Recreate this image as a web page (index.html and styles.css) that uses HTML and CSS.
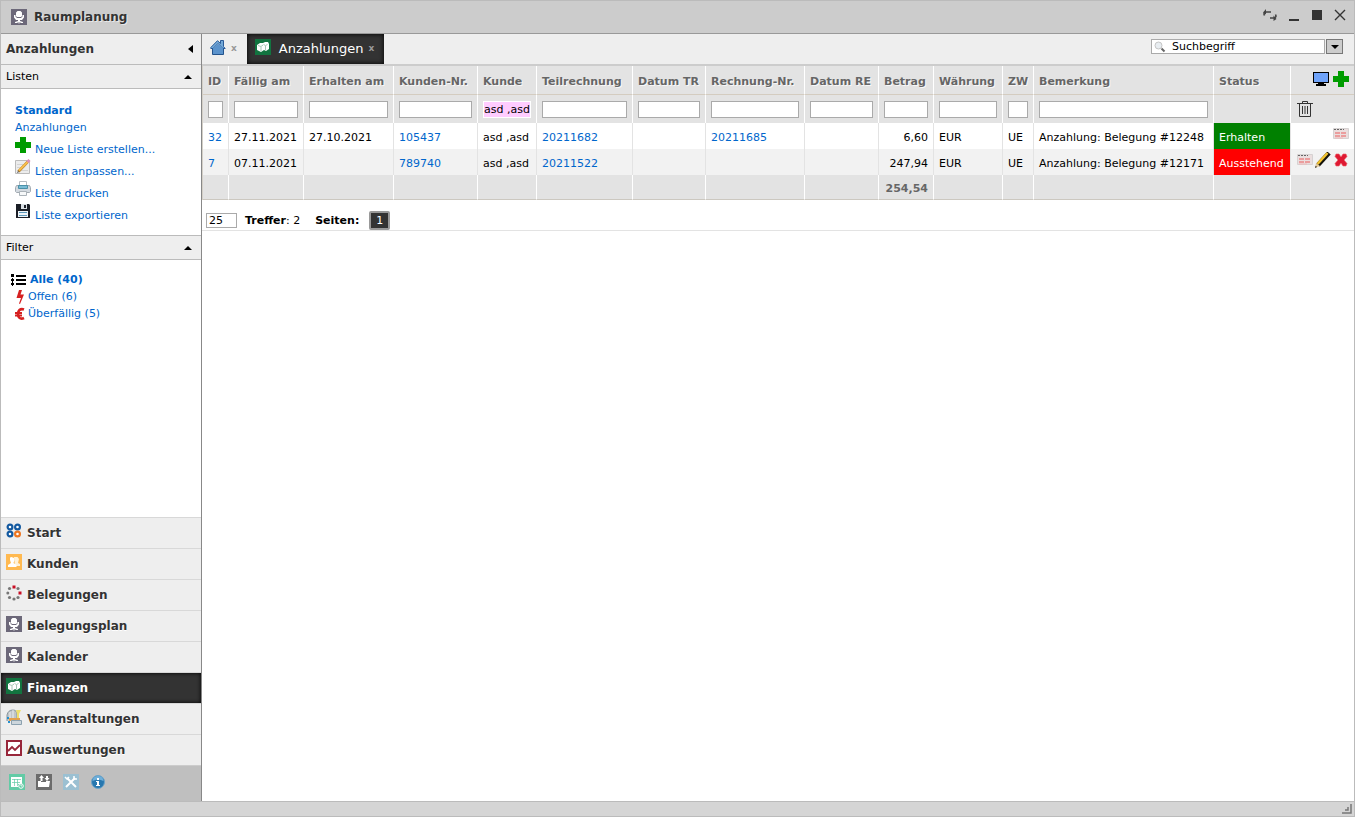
FILE: index.html
```html
<!DOCTYPE html>
<html lang="de">
<head>
<meta charset="utf-8">
<title>Raumplanung</title>
<link rel="stylesheet" href="styles.css">
</head>
<body>
<svg class="sprite" aria-hidden="true">
  <symbol id="chair" viewBox="0 0 16 16"><path fill="#6c6879" d="M0 0h16v16H0z"/><path fill="#fff" d="M6.500 2h3l1.500 1.500V7L10 8H6L5 7V3.500zM3 6h1.500v1.500L6 9h4l1.500-1.500V6H13v2.500L11 11H9v1l3 1v1h-2l-1.500-1v1.500h-1V13L6 14H4v-1l3-1v-1H5L3 8.500z"/></symbol>
  <symbol id="money" viewBox="0 0 16 16"><path fill="#127440" d="M0 0h16v16H0z"/><path fill="#fff" d="M2 6l3-2h3l2-1h3l1 2v5l-3 2-2-1-3 2-4-2z"/><path fill="none" stroke="#8fb8a1" stroke-width=".8" d="M3 6.500l3 1 2-1.500M6 8v4M8.500 5.500l2 1 2-1M10.500 7v4"/></symbol>
  <symbol id="home" viewBox="0 0 16 16"><path fill="#4d85bf" stroke="#23538c" d="M2.500 8v7.500h11V8"/><path fill="#73a9d8" stroke="#2a5b98" d="M.8 8.500L7.500 1.700 10.500 4.500V1.500h3v6l1.700 2H13L8 4.500 3 9.500H.8z"/><path fill="#5b93cc" d="M3 9l5-4 5 4v6H3z"/></symbol>
  <symbol id="plus" viewBox="0 0 16 16"><path fill="#009c00" d="M5 0h6v5h5v6h-5v5H5v-5H0V5h5z"/></symbol>
  <symbol id="note" viewBox="0 0 16 16"><path fill="#ececec" stroke="#bbb" d="M.5 1.500h14v13H.5z"/><path stroke="#d3d3d3" d="M2 5.500h6M2 8.500h5M2 11.500h11"/><path stroke="#b57f2a" stroke-width="2.600" d="M3.500 12.500L13 2.500"/><path stroke="#f8bd4a" stroke-width="2" d="M4 11.500L13 2.500"/><path stroke="#dc91b8" stroke-width="3" d="M12.500 3l2-2"/><path fill="#333" d="M2 14l1-2 1 1z"/></symbol>
  <symbol id="printer" viewBox="0 0 16 16"><path fill="#fff" stroke="#b6bcc2" d="M4.500.5h7v5h-7z"/><path fill="#d4dae0" stroke="#a3abb2" d="M1.500 4.500h13l1 2v4l-1 1h-13l-1-1v-4z"/><path fill="#79bcd5" stroke="#4a90a8" d="M3.500 4.500h9v3h-9z"/><path fill="#f6f8f9" stroke="#abb3b9" d="M4.500 10.500h7v4h-7z"/></symbol>
  <symbol id="disk" viewBox="0 0 16 16"><path fill="#1b1e26" d="M1 1h13l1 1v13H1z"/><path fill="#dae0e5" d="M6 1h6v5H6z"/><path fill="#1b1e26" d="M9 2h2v3H9z"/><path fill="#eef3f7" d="M3 8h10v6H3z"/><path stroke="#5b97ba" d="M4 9.500h8M4 12.500h8"/></symbol>
  <symbol id="list" viewBox="0 0 16 12"><path fill="#000" d="M0 0h3v3H0zM0 5h3v2H0zM1 4h1v4H1zM0 9h3v2H0zM1 8h1v4H1zM5 1h10v2H5zM5 5h10v2H5zM5 9h10v2H5z"/></symbol>
  <symbol id="bolt" viewBox="0 0 10 14"><path fill="#d62020" d="M4 0h3L5.500 4.500H9L5 14l-1-.5L6 8H1.500z"/></symbol>
  <symbol id="euro" viewBox="0 0 10 14"><path fill="none" stroke="#d62020" stroke-width="2.600" d="M9 2.500C5 1 3 4 3 7s2 6 6 4"/><path stroke="#d62020" stroke-width="2" d="M0 6h7M0 8.500h7"/></symbol>
  <symbol id="start" viewBox="0 0 16 16"><g fill="#fff" stroke-width="2.200"><circle cx="4" cy="4" r="2.400" stroke="#1359a0"/><circle cx="11.500" cy="4" r="2.400" stroke="#1359a0"/><circle cx="4" cy="11" r="2.400" stroke="#1359a0"/><circle cx="11.500" cy="11" r="2.400" stroke="#ee7621"/></g></symbol>
  <symbol id="people" viewBox="0 0 16 16"><path fill="#ffb950" d="M0 0h16v16H0z"/><path fill="#fff2d9" d="M8 3h3.500L13 5l-1 4 2 1v2H9z"/><path fill="#fff" d="M4 3.500L5.500 3 8 4l.5 2L7.500 9l3 2v2H2v-2l3-2-1-3z"/></symbol>
  <symbol id="ring" viewBox="0 0 16 16"><g fill="#777"><circle cx="3.500" cy="3.500" r="1.600"/><circle cx="12" cy="3.500" r="1.600"/><circle cx="1.800" cy="8" r="1.500"/><circle cx="3.500" cy="12.500" r="1.600"/><circle cx="8" cy="14" r="1.600"/><circle cx="12" cy="12.500" r="1.600"/></g><path fill="#c90e24" d="M6.500.5h3v3h-3zM12.500 6.500h3v3h-3z"/></symbol>
  <symbol id="event" viewBox="0 0 16 16"><path fill="#c0c5c8" stroke="#8b969d" d="M1 12V6q1-5 6-5 4 0 4 5v4"/><path fill="none" stroke="#eceff1" d="M4 10V3M7 9V1"/><path fill="#eee06c" d="M10 1h5l-2 4v6h-2V5z"/><path fill="#e3a04c" d="M3 9h11v3H3z"/><path fill="#cdd6dc" stroke="#8ba1af" d="M5.500 11.500h10v4h-10z"/><path fill="#248fcf" d="M1 8h2v2H1zM2 12h2v2H2z"/></symbol>
  <symbol id="chart" viewBox="0 0 16 16"><path fill="#fff" stroke="#98263a" stroke-width="2" d="M1 1h14v14H1z"/><path fill="none" stroke="#98263a" stroke-width="1.800" d="M2 11l4-4 3 3 5-5"/></symbol>
  <symbol id="calendar" viewBox="0 0 16 16"><path fill="#63cba6" d="M0 0h16v16H0z"/><path fill="#fff" d="M2 3h11v7H9v3H2z"/><path stroke="#63cba6" stroke-width=".7" d="M3 5.500h9M3 8.500h8M5.500 5v7M8.500 5v7"/><circle cx="12" cy="12" r="2.300" fill="#63cba6" stroke="#fff"/><path fill="none" stroke="#fff" stroke-width=".8" d="M12 10.500V12h1"/></symbol>
  <symbol id="transfer" viewBox="0 0 16 16"><path fill="#6c6c6c" d="M0 0h16v16H0z"/><path fill="#fff" d="M2 7h3v1h5V7h4l-1 6H2zM5.500 1L8 4H6.500v3h-2V4H3zM10 2h2v2h1.500L11 7 8.500 4H10z"/></symbol>
  <symbol id="tools" viewBox="0 0 16 16"><path fill="#9bc0d2" d="M0 0h16v16H0z"/><path stroke="#fff" stroke-width="2" d="M4 4l9 9M12 4l-9 9"/><path fill="none" stroke="#fff" stroke-width="1.500" d="M2 3l2 2 2-2M11 2v3h3"/></symbol>
  <symbol id="info" viewBox="0 0 16 16"><circle cx="8" cy="8" r="6.500" fill="#2777af" stroke="#6fa5c9"/><path fill="#70afd9" d="M2.500 7Q3 2 8 2t5.500 5Q8 4 2.500 7z"/><path fill="#fff" d="M7 4h2v2H7zM6 7h3v4h1v1H6v-1h1V8H6z"/></symbol>
  <symbol id="monitor" viewBox="0 0 16 16"><path fill="#000" d="M0 1h16v11h-5v1h2v2H3v-2h2v-1H0z"/><path fill="#6fa3fa" d="M1 2h14v9H1z"/></symbol>
  <symbol id="trash" viewBox="0 0 16 16"><path fill="none" stroke="#333" d="M5.500 2V.5h5V2M0 2.500h16M2.500 3v12.500h11V3"/><path stroke="#333" d="M5.500 5v8M8 5v8M10.500 5v8"/></symbol>
  <symbol id="slip" viewBox="0 0 16 16"><path fill="#eadede" stroke="#d6d2d2" d="M.5 2.500h15v10H.5z"/><path stroke="#666" stroke-dasharray="2 1" d="M1 3.500h10"/><path stroke="#eb9d9d" stroke-width="2" stroke-dasharray="5 1" d="M2 7h12M2 10h11"/><path stroke="#f0b8b8" d="M2 12h8"/></symbol>
  <symbol id="pencil" viewBox="0 0 16 16"><path stroke="#15130b" stroke-width="4.600" d="M3 13L14 1"/><path stroke="#f3c32f" stroke-width="2.600" d="M2.500 12L12.500 1"/><path fill="#e3c999" d="M0 16l1-5 4 3z"/><path fill="#222" d="M0 16l.7-2.300L2 15z"/></symbol>
  <symbol id="delete" viewBox="0 0 16 16"><path fill="#df1932" stroke="#ed5b63" stroke-width=".6" d="M3 2h3l2 3 2-3h3l1 2.500L11 8l3 3.500-1 2.500h-3l-2-3-2 3H3l-1-2.500L5 8 2 4.500z"/></symbol>
  <symbol id="lens" viewBox="0 0 12 12"><path stroke="#666" stroke-width="2" d="M7.500 7.500l3 3"/><circle cx="4.500" cy="4.500" r="3.500" fill="#e8edf1" stroke="#c5c5c5"/></symbol>
  <symbol id="refresh" viewBox="0 0 14 12"><path fill="none" stroke="#444" stroke-width="1.600" d="M1.500 6.500Q0 3.500 3.500 3H8M12.500 5.500Q14 8.500 10.500 9H7"/><path fill="#444" d="M3 0v5.500L0 3.500zM10.500 6.500V12l3-2z"/></symbol>
  <symbol id="min" viewBox="0 0 12 12"><path fill="#333" d="M1 10h10v2H1z"/></symbol>
  <symbol id="max" viewBox="0 0 12 12"><path fill="#333" d="M1 1h10v10H1z"/></symbol>
  <symbol id="close" viewBox="0 0 12 12"><path stroke="#333" stroke-width="1.400" d="M1 1l10 10M11 1L1 11"/></symbol>
  <symbol id="up" viewBox="0 0 8 4"><path d="M0 4l4-4 4 4z"/></symbol>
  <symbol id="down" viewBox="0 0 8 4"><path d="M0 0l4 4 4-4z"/></symbol>
  <symbol id="left" viewBox="0 0 5 8"><path d="M5 0L0 4l5 4z"/></symbol>
  <symbol id="grip" viewBox="0 0 10 10"><path fill="none" stroke="#777" stroke-width="1.500" d="M9 0v9H0M6 3v3H3"/></symbol>
</svg>

<div class="window">
  <header class="titlebar">
    <svg class="icon"><use href="#chair"/></svg>
    <h1 class="window-title">Raumplanung</h1>
    <button class="plain window-button" aria-label="Neu laden"><svg class="refresh"><use href="#refresh"/></svg></button>
    <button class="plain window-button" aria-label="Minimieren"><svg class="control"><use href="#min"/></svg></button>
    <button class="plain window-button" aria-label="Maximieren"><svg class="control"><use href="#max"/></svg></button>
    <button class="plain window-button" aria-label="Schließen"><svg class="control"><use href="#close"/></svg></button>
  </header>

  <div class="body">
    <aside class="sidebar">
      <div class="side-head"><h2 class="side-title">Anzahlungen</h2><button class="plain" aria-label="Einklappen"><svg class="arrow-left"><use href="#left"/></svg></button></div>
      <button class="section-head">Listen<svg class="arrow"><use href="#up"/></svg></button>
      <div class="lists">
        <a class="list-link current" href="#">Standard</a>
        <a class="list-link" href="#">Anzahlungen</a>
        <div class="actions">
          <a class="action" href="#"><svg class="icon"><use href="#plus"/></svg><span class="action-text">Neue Liste erstellen...</span></a>
          <a class="action" href="#"><svg class="icon"><use href="#note"/></svg><span class="action-text">Listen anpassen...</span></a>
          <a class="action" href="#"><svg class="icon"><use href="#printer"/></svg><span class="action-text">Liste drucken</span></a>
          <a class="action" href="#"><svg class="icon"><use href="#disk"/></svg><span class="action-text">Liste exportieren</span></a>
        </div>
      </div>
      <button class="section-head filter-head">Filter<svg class="arrow"><use href="#up"/></svg></button>
      <div class="filters">
        <a class="filter current all" href="#"><svg class="list-icon"><use href="#list"/></svg>Alle (40)</a>
        <a class="filter" href="#"><svg class="small-icon"><use href="#bolt"/></svg>Offen (6)</a>
        <a class="filter" href="#"><svg class="small-icon"><use href="#euro"/></svg>Überfällig (5)</a>
      </div>
      <nav class="nav">
        <a class="nav-item" href="#"><svg class="icon"><use href="#start"/></svg>Start</a>
        <a class="nav-item" href="#"><svg class="icon"><use href="#people"/></svg>Kunden</a>
        <a class="nav-item" href="#"><svg class="icon"><use href="#ring"/></svg>Belegungen</a>
        <a class="nav-item" href="#"><svg class="icon"><use href="#chair"/></svg>Belegungsplan</a>
        <a class="nav-item" href="#"><svg class="icon"><use href="#chair"/></svg>Kalender</a>
        <a class="nav-item active" href="#"><svg class="icon"><use href="#money"/></svg>Finanzen</a>
        <a class="nav-item" href="#"><svg class="icon"><use href="#event"/></svg>Veranstaltungen</a>
        <a class="nav-item" href="#"><svg class="icon"><use href="#chart"/></svg>Auswertungen</a>
      </nav>
      <div class="tools">
        <button class="plain" aria-label="Kalender"><svg class="icon"><use href="#calendar"/></svg></button>
        <button class="plain" aria-label="Dateien"><svg class="icon"><use href="#transfer"/></svg></button>
        <button class="plain" aria-label="Einstellungen"><svg class="icon"><use href="#tools"/></svg></button>
        <button class="plain" aria-label="Info"><svg class="icon"><use href="#info"/></svg></button>
      </div>
    </aside>

    <main class="main">
      <div class="tabs">
        <div class="tab home"><a class="tab-link" href="#" aria-label="Startseite"><svg class="icon"><use href="#home"/></svg></a><button class="tab-close" aria-label="Tab schließen">x</button></div>
        <div class="tab selected"><a class="tab-link" href="#"><svg class="icon"><use href="#money"/></svg>Anzahlungen</a><button class="tab-close" aria-label="Tab schließen">x</button></div>
        <div class="search">
          <label class="search-box"><svg class="lens"><use href="#lens"/></svg><input class="search-input" type="text" value="Suchbegriff" aria-label="Suche"></label>
          <button class="search-more" aria-label="Suchoptionen"><svg class="arrow"><use href="#down"/></svg></button>
        </div>
      </div>

      <table class="grid">
        <colgroup><col class="w-id"><col class="w-due"><col class="w-got"><col class="w-cno"><col class="w-cust"><col class="w-part"><col class="w-dtr"><col class="w-inv"><col class="w-dre"><col class="w-sum"><col class="w-cur"><col class="w-zw"><col><col class="w-stat"><col class="w-act"></colgroup>
        <thead>
          <tr class="names"><th>ID</th><th>Fällig am</th><th>Erhalten am</th><th>Kunden-Nr.</th><th>Kunde</th><th>Teilrechnung</th><th>Datum TR</th><th>Rechnung-Nr.</th><th>Datum RE</th><th>Betrag</th><th>Währung</th><th>ZW</th><th>Bemerkung</th><th>Status</th>
            <td><div class="row-actions wide"><button class="plain" aria-label="Ansicht"><svg class="icon"><use href="#monitor"/></svg></button><button class="plain" aria-label="Neu"><svg class="icon"><use href="#plus"/></svg></button></div></td></tr>
          <tr class="inputs">
            <td><input class="field" type="text" aria-label="ID"></td>
            <td><input class="field" type="text" aria-label="Fällig am"></td>
            <td><input class="field" type="text" aria-label="Erhalten am"></td>
            <td><input class="field" type="text" aria-label="Kunden-Nr."></td>
            <td><input class="field filled" type="text" aria-label="Kunde" value="asd ,asd"></td>
            <td><input class="field" type="text" aria-label="Teilrechnung"></td>
            <td><input class="field" type="text" aria-label="Datum TR"></td>
            <td><input class="field" type="text" aria-label="Rechnung-Nr."></td>
            <td><input class="field" type="text" aria-label="Datum RE"></td>
            <td><input class="field" type="text" aria-label="Betrag"></td>
            <td><input class="field" type="text" aria-label="Währung"></td>
            <td><input class="field" type="text" aria-label="ZW"></td>
            <td><input class="field" type="text" aria-label="Bemerkung"></td>
            <td></td>
            <td><button class="plain" aria-label="Filter löschen"><svg class="icon"><use href="#trash"/></svg></button></td>
          </tr>
        </thead>
        <tbody>
          <tr><td><a href="#">32</a></td><td>27.11.2021</td><td>27.10.2021</td><td><a href="#">105437</a></td><td>asd ,asd</td><td><a href="#">20211682</a></td><td></td><td><a href="#">20211685</a></td><td></td><td class="num">6,60</td><td>EUR</td><td>UE</td><td>Anzahlung: Belegung #12248</td><td class="ok">Erhalten</td>
            <td><div class="row-actions"><button class="plain" aria-label="Beleg"><svg class="icon"><use href="#slip"/></svg></button></div></td></tr>
          <tr><td><a href="#">7</a></td><td>07.11.2021</td><td></td><td><a href="#">789740</a></td><td>asd ,asd</td><td><a href="#">20211522</a></td><td></td><td></td><td></td><td class="num">247,94</td><td>EUR</td><td>UE</td><td>Anzahlung: Belegung #12171</td><td class="open">Ausstehend</td>
            <td><div class="row-actions"><button class="plain" aria-label="Beleg"><svg class="icon"><use href="#slip"/></svg></button><button class="plain" aria-label="Bearbeiten"><svg class="icon"><use href="#pencil"/></svg></button><button class="plain" aria-label="Löschen"><svg class="icon"><use href="#delete"/></svg></button></div></td></tr>
        </tbody>
        <tfoot>
          <tr><td></td><td></td><td></td><td></td><td></td><td></td><td></td><td></td><td></td><td class="num">254,54</td><td></td><td></td><td></td><td></td><td></td></tr>
        </tfoot>
      </table>

      <div class="pager">
        <input class="page-size" type="text" value="25" aria-label="Treffer pro Seite">
        <span class="hits"><b>Treffer</b>: 2</span>
        <b class="pages">Seiten:</b>
        <button class="page">1</button>
      </div>
    </main>
  </div>

  <footer class="statusbar"><svg class="grip"><use href="#grip"/></svg></footer>
</div>
</body>
</html>
```

FILE: styles.css
```css
* { box-sizing: border-box; }

body {
  margin: 0;
  font: 11px/16px Verdana, "DejaVu Sans", sans-serif;
  color: #000;
}

button, input { font: inherit; color: inherit; }
svg { display: block; flex: none; }
a { color: #06c; text-decoration: none; }

.sprite { position: absolute; width: 0; height: 0; }
.icon { width: 16px; height: 16px; }
.arrow { width: 8px; height: 4px; }
.plain { display: block; padding: 0; border: 0; background: none; }

.window {
  display: flex;
  flex-direction: column;
  min-height: 100vh;
  border: 1px solid #bbb;
}

.titlebar {
  display: flex;
  align-items: center;
  gap: 11px;
  height: 33px;
  padding: 0 8px 0 10px;
  border-bottom: 1px solid #999;
  background: #ccc;
}
.window-title {
  flex: 1;
  margin: 0 0 0 -4px;
  font-size: 12px;
  color: #333;
  text-shadow: 1px 1px 0 #e8e8e8;
}
.window-button { padding-bottom: 4px; }
.refresh { width: 14px; height: 12px; }
.control { width: 12px; height: 12px; }

.body { display: flex; flex: 1; }

.sidebar {
  display: flex;
  flex-direction: column;
  flex: none;
  width: 201px;
  border-right: 1px solid #888;
}
.side-head {
  display: flex;
  align-items: center;
  justify-content: space-between;
  height: 31px;
  padding: 0 8px 0 5px;
  border-bottom: 1px solid #bbb;
  background: #eee;
}
.side-title { margin: 0; font-size: 12px; color: #333; }
.arrow-left { width: 5px; height: 8px; }

.section-head {
  display: flex;
  align-items: center;
  justify-content: space-between;
  height: 24px;
  padding: 1px 9px 0 5px;
  border: 0;
  border-bottom: 1px solid #bbb;
  background: #eee;
}
.filter-head { height: 25px; border-top: 1px solid #bbb; }

.lists { padding: 13px 14px 10px; }
.list-link { display: block; line-height: 17px; }
.current { font-weight: bold; }
.actions { padding-top: 1px; }
.action { display: flex; gap: 4px; height: 22px; }
.action-text { padding-top: 5px; }

.filters { flex: 1; padding: 11px 14px 11px 10px; }
.filter {
  display: flex;
  align-items: center;
  gap: 3px;
  padding-left: 4px;
  line-height: 17px;
}
.filter.all { padding-left: 0; }
.list-icon { width: 16px; height: 12px; }
.small-icon { width: 10px; height: 14px; }

.nav-item {
  display: flex;
  gap: 5px;
  height: 31px;
  padding: 0 5px;
  border-top: 1px solid #d8d8d8;
  background: #eee;
  font-size: 12px;
  font-weight: bold;
  line-height: 30px;
  color: #333;
  text-shadow: 0 1px 0 #fff;
}
.nav-item .icon { margin-top: 5px; }
.nav-item.active {
  background: #333;
  color: #fff;
  text-shadow: none;
  box-shadow: inset 0 0 4px #000;
}

.tools {
  display: flex;
  gap: 11px;
  height: 36px;
  padding: 7px 8px 11px;
  border-top: 1px solid #ccc;
  background: #bfbfbf;
}

.main { flex: 1; min-width: 0; }

.tabs {
  display: flex;
  height: 32px;
  border-bottom: 2px solid #ccc;
  background: #eee;
}
.tab { display: flex; gap: 4px; padding: 0 8px; }
.tab-link {
  display: flex;
  gap: 8px;
  font-size: 13px;
  line-height: 29px;
  color: #fff;
}
.tab-link .icon { margin-top: 5px; }
.tab-close {
  padding: 0 2px 2px 1px;
  border: 0;
  background: none;
  font-size: 9px;
  font-weight: bold;
  color: #999;
}
.tab.selected { background: #333; box-shadow: inset 0 0 5px #000; }
.search {
  display: flex;
  align-items: flex-start;
  gap: 1px;
  margin-left: auto;
  padding: 5px 11px 0 0;
}
.search-box {
  display: flex;
  align-items: center;
  width: 174px;
  height: 15px;
  padding-left: 2px;
  border: 1px solid #aaa;
  background: #fff;
}
.lens { width: 12px; height: 12px; }
.search-input {
  flex: 1;
  min-width: 0;
  height: 13px;
  padding: 0 0 0 6px;
  border: 0;
  background: none;
}
.search-more {
  display: grid;
  place-items: center;
  width: 17px;
  height: 15px;
  padding: 0;
  border: 1px solid #777;
  background: #ccc;
}

.grid {
  width: 100%;
  table-layout: fixed;
  border-collapse: separate;
  border-spacing: 0;
  border-left: 1px solid #d4d0c8;
}
.w-id { width: 26px; }
.w-due { width: 75px; }
.w-got { width: 90px; }
.w-cno { width: 84px; }
.w-cust { width: 59px; }
.w-part { width: 96px; }
.w-dtr { width: 73px; }
.w-inv { width: 99px; }
.w-dre { width: 74px; }
.w-sum { width: 55px; }
.w-cur { width: 69px; }
.w-zw { width: 31px; }
.w-stat { width: 77px; }
.w-act { width: 63px; }

.grid th, .grid td {
  height: 26px;
  padding: 3px 5px 0;
  border-right: 1px solid #e3e3e3;
  text-align: left;
  white-space: nowrap;
}
.grid tr > :last-child { padding: 0 5px 0 6px; border-right: 0; }
.grid .num { text-align: right; }
.grid thead th, .grid thead td, .grid tfoot td {
  border-right-color: #fff;
  background: #e3e3e3;
  color: #666;
}
.grid .names th, .grid .names td {
  height: 29px;
  border-bottom: 1px solid #d4ccc0;
  text-shadow: 1px 1px 0 #f8f8f8;
}
.grid .inputs td { height: 28px; padding-top: 0; padding-bottom: 0; }
.grid tfoot td {
  height: 25px;
  border-bottom: 1px solid #ccc8c0;
  font-weight: bold;
}
.grid tbody tr:nth-child(even) { background: #f2f2f2; }
.grid .ok { background: #008000; color: #fff; }
.grid .open { background: #f00; color: #fff; }
.row-actions { display: flex; justify-content: flex-end; gap: 2px; padding-bottom: 4px; }
.row-actions.wide { gap: 4px; padding-bottom: 2px; }

.field {
  display: block;
  width: 100%;
  height: 17px;
  padding: 0;
  border: 1px solid #aaa;
  background: #fff;
}
.field.filled { border-color: #fff; background: #fcf; color: #000; }

.pager {
  display: flex;
  align-items: center;
  gap: 8px;
  height: 31px;
  padding: 11px 4px 0;
  border-bottom: 1px solid #e3e3e3;
}
.page-size { width: 31px; height: 15px; padding: 0 2px; border: 1px solid #aaa; }
.hits { padding-right: 7px; }
.pages { padding-right: 2px; }
.page {
  width: 21px;
  height: 19px;
  padding: 0;
  border: 2px solid #999;
  border-radius: 2px;
  background: #333;
  line-height: 14px;
  color: #fff;
}

.statusbar {
  display: flex;
  align-items: flex-end;
  justify-content: flex-end;
  height: 15px;
  padding: 2px;
  border-top: 1px solid #bbb;
  background: #d5d5d5;
}
.grip { width: 10px; height: 10px; }
```
